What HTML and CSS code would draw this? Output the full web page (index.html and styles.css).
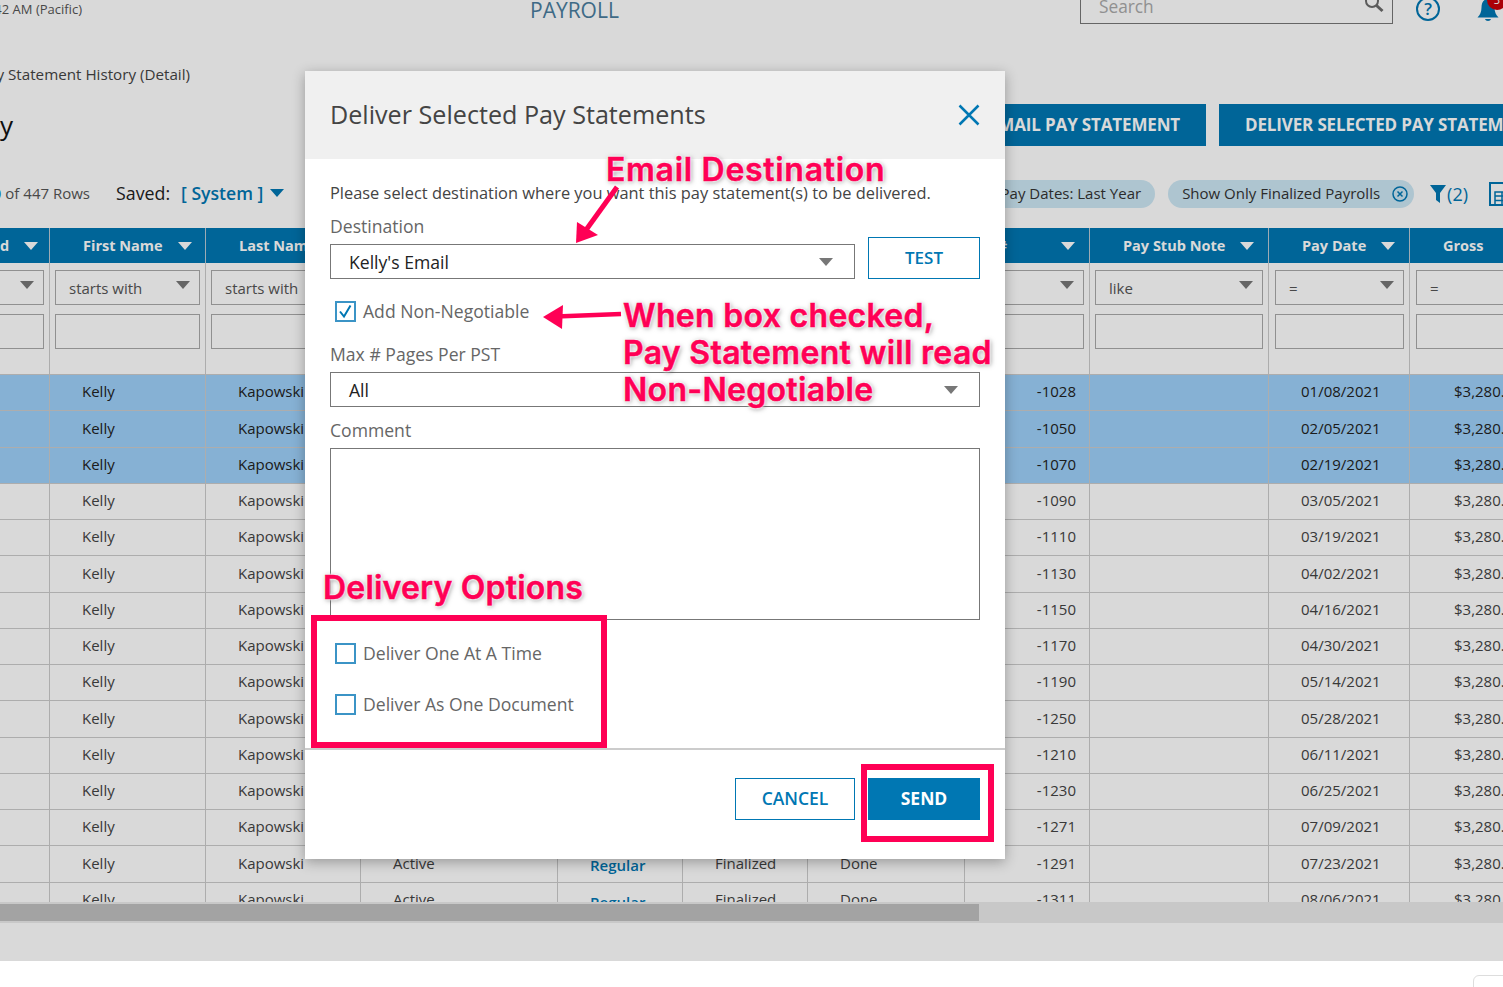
FILE: index.html
```html
<!DOCTYPE html>
<html lang="en">
<head>
<meta charset="utf-8">
<title>Deliver Selected Pay Statements</title>
<link rel="stylesheet" href="styles.css">
</head>
<body>
<div class="page">
  <header class="topbar">
    <div class="time"><span>9:42 AM (Pacific)</span></div>
    <div class="app-name">PAYROLL</div>
    <div class="search">
      <span class="search-text">Search</span>
      <svg class="search-icon" width="20" height="20" viewBox="0 0 20 20"><circle cx="8" cy="6" r="6" fill="none" stroke="#6b6b6b" stroke-width="2"/><path d="M12.5 10.5 18.5 16" stroke="#6b6b6b" stroke-width="3" fill="none"/></svg>
    </div>
    <svg class="help" width="26" height="26" viewBox="0 0 26 26"><circle cx="13" cy="13" r="11" fill="none" stroke="#0077b3" stroke-width="2"/><text x="13" y="19" text-anchor="middle" class="help-q">?</text></svg>
    <div class="bell-wrap">
      <svg width="22" height="26" viewBox="0 0 22 26"><path d="M11 2C6.500 2 4.500 6 4.500 10.500 4.500 15 3 18 .5 20.500H21.500C19 18 17.500 15 17.500 10.500 17.500 6 15.500 2 11 2Z" fill="#0077b3"/><path d="M8 22H14C13.500 24.500 8.500 24.500 8 22Z" fill="#0077b3"/></svg>
      <span class="badge">3</span>
    </div>
  </header>

  <div class="crumb"><span>Pay Statement History (Detail)</span></div>

  <div class="title-row">
    <h1 class="title"><span>Pay Statement History</span></h1>
    <div class="actions">
      <button class="primary email">EMAIL PAY STATEMENT</button>
      <button class="primary">DELIVER SELECTED PAY STATEMENTS</button>
    </div>
  </div>

  <div class="toolbar">
    <div class="rows-count"><span><b class="range">1 - 50</b> of 447 Rows</span></div>
    <div class="saved">Saved:</div>
    <div class="system">[ System ]</div>
    <i class="tri tri-blue"></i>
    <div class="filters">
      <div class="chip">Pay Dates: Last Year</div>
      <div class="chip chip-x">Show Only Finalized Payrolls
        <svg width="16" height="16" viewBox="0 0 16 16"><circle cx="8" cy="8" r="7" fill="none" stroke="#0077b3" stroke-width="1.500"/><path d="M5.500 5.500 10.500 10.500M10.500 5.500 5.500 10.500" stroke="#0077b3" stroke-width="1.500"/></svg>
      </div>
      <svg class="funnel" width="16" height="20" viewBox="0 0 16 20"><path d="M0 1H16L10 9V19L6 16V9Z" fill="#0077b3"/></svg>
      <span class="filter-count">(2)</span>
      <svg class="file" width="22" height="24" viewBox="0 0 22 24"><path d="M1 1H14L21 7V23H1Z" fill="none" stroke="#0077b3" stroke-width="2"/><path d="M6 14H21M6 18.500H21M6 23V10H21M13 10V23" fill="none" stroke="#0077b3" stroke-width="1.500"/></svg>
    </div>
  </div>

  <div class="grid-view">
    <div class="row head">
      <div class="hc hc-first"><span>d</span><i class="tri tri-white"></i></div>
      <div class="hc"><span>First Name</span><i class="tri tri-white"></i></div>
      <div class="hc"><span>Last Name</span><i class="tri tri-white"></i></div>
      <div class="hc"><span>Status</span><i class="tri tri-white"></i></div>
      <div class="hc"><span>Type</span><i class="tri tri-white"></i></div>
      <div class="hc"><span>Payroll</span><i class="tri tri-white"></i></div>
      <div class="hc"><span>Delivery</span><i class="tri tri-white"></i></div>
      <div class="hc hc-num"><span>Check #</span><i class="tri tri-white"></i></div>
      <div class="hc"><span>Pay Stub Note</span><i class="tri tri-white"></i></div>
      <div class="hc"><span>Pay Date</span><i class="tri tri-white"></i></div>
      <div class="hc"><span>Gross</span></div>
    </div>
    <div class="row filter-row">
      <div class="fc fc-first"><div class="fbox fsel"><i class="tri tri-grey"></i></div><div class="fbox"></div></div>
      <div class="fc"><div class="fbox fsel">starts with<i class="tri tri-grey"></i></div><div class="fbox"></div></div>
      <div class="fc"><div class="fbox fsel">starts with<i class="tri tri-grey"></i></div><div class="fbox"></div></div>
      <div class="fc"><div class="fbox fsel">starts with<i class="tri tri-grey"></i></div><div class="fbox"></div></div>
      <div class="fc"><div class="fbox fsel">like<i class="tri tri-grey"></i></div><div class="fbox"></div></div>
      <div class="fc"><div class="fbox fsel">like<i class="tri tri-grey"></i></div><div class="fbox"></div></div>
      <div class="fc"><div class="fbox fsel">like<i class="tri tri-grey"></i></div><div class="fbox"></div></div>
      <div class="fc"><div class="fbox fsel">=<i class="tri tri-grey"></i></div><div class="fbox"></div></div>
      <div class="fc"><div class="fbox fsel">like<i class="tri tri-grey"></i></div><div class="fbox"></div></div>
      <div class="fc fc-wide"><div class="fbox fsel">=<i class="tri tri-grey"></i></div><div class="fbox"></div></div>
      <div class="fc fc-wide"><div class="fbox fsel">=</div><div class="fbox"></div></div>
    </div>
    <div class="row data sel"><div></div><div>Kelly</div><div>Kapowski</div><div>Active</div><div class="link">Regular</div><div>Finalized</div><div>Done</div><div class="num">-1028</div><div></div><div>01/08/2021</div><div class="gross">$3,280.00</div></div>
    <div class="row data sel"><div></div><div>Kelly</div><div>Kapowski</div><div>Active</div><div class="link">Regular</div><div>Finalized</div><div>Done</div><div class="num">-1050</div><div></div><div>02/05/2021</div><div class="gross">$3,280.00</div></div>
    <div class="row data sel"><div></div><div>Kelly</div><div>Kapowski</div><div>Active</div><div class="link">Regular</div><div>Finalized</div><div>Done</div><div class="num">-1070</div><div></div><div>02/19/2021</div><div class="gross">$3,280.00</div></div>
    <div class="row data"><div></div><div>Kelly</div><div>Kapowski</div><div>Active</div><div class="link">Regular</div><div>Finalized</div><div>Done</div><div class="num">-1090</div><div></div><div>03/05/2021</div><div class="gross">$3,280.00</div></div>
    <div class="row data"><div></div><div>Kelly</div><div>Kapowski</div><div>Active</div><div class="link">Regular</div><div>Finalized</div><div>Done</div><div class="num">-1110</div><div></div><div>03/19/2021</div><div class="gross">$3,280.00</div></div>
    <div class="row data"><div></div><div>Kelly</div><div>Kapowski</div><div>Active</div><div class="link">Regular</div><div>Finalized</div><div>Done</div><div class="num">-1130</div><div></div><div>04/02/2021</div><div class="gross">$3,280.00</div></div>
    <div class="row data"><div></div><div>Kelly</div><div>Kapowski</div><div>Active</div><div class="link">Regular</div><div>Finalized</div><div>Done</div><div class="num">-1150</div><div></div><div>04/16/2021</div><div class="gross">$3,280.00</div></div>
    <div class="row data"><div></div><div>Kelly</div><div>Kapowski</div><div>Active</div><div class="link">Regular</div><div>Finalized</div><div>Done</div><div class="num">-1170</div><div></div><div>04/30/2021</div><div class="gross">$3,280.00</div></div>
    <div class="row data"><div></div><div>Kelly</div><div>Kapowski</div><div>Active</div><div class="link">Regular</div><div>Finalized</div><div>Done</div><div class="num">-1190</div><div></div><div>05/14/2021</div><div class="gross">$3,280.00</div></div>
    <div class="row data"><div></div><div>Kelly</div><div>Kapowski</div><div>Active</div><div class="link">Regular</div><div>Finalized</div><div>Done</div><div class="num">-1250</div><div></div><div>05/28/2021</div><div class="gross">$3,280.00</div></div>
    <div class="row data"><div></div><div>Kelly</div><div>Kapowski</div><div>Active</div><div class="link">Regular</div><div>Finalized</div><div>Done</div><div class="num">-1210</div><div></div><div>06/11/2021</div><div class="gross">$3,280.00</div></div>
    <div class="row data"><div></div><div>Kelly</div><div>Kapowski</div><div>Active</div><div class="link">Regular</div><div>Finalized</div><div>Done</div><div class="num">-1230</div><div></div><div>06/25/2021</div><div class="gross">$3,280.00</div></div>
    <div class="row data"><div></div><div>Kelly</div><div>Kapowski</div><div>Active</div><div class="link">Regular</div><div>Finalized</div><div>Done</div><div class="num">-1271</div><div></div><div>07/09/2021</div><div class="gross">$3,280.00</div></div>
    <div class="row data"><div></div><div>Kelly</div><div>Kapowski</div><div>Active</div><div class="link">Regular</div><div>Finalized</div><div>Done</div><div class="num">-1291</div><div></div><div>07/23/2021</div><div class="gross">$3,280.00</div></div>
    <div class="row data"><div></div><div>Kelly</div><div>Kapowski</div><div>Active</div><div class="link">Regular</div><div>Finalized</div><div>Done</div><div class="num">-1311</div><div></div><div>08/06/2021</div><div class="gross">$3,280.00</div></div>
  </div>
  <div class="hscroll"><div class="hthumb"></div></div>
</div>

<div class="corner-widget"></div>
<div class="overlay"></div>

<section class="modal">
  <div class="modal-head">
    <h2>Deliver Selected Pay Statements</h2>
    <svg width="22" height="22" viewBox="0 0 22 22"><path d="M1.500 1.500 20.500 20.500M20.500 1.500 1.500 20.500" stroke="#0077b3" stroke-width="2.500" fill="none"/></svg>
  </div>
  <div class="modal-body">
    <p class="intro">Please select destination where you want this pay statement(s) to be delivered.</p>
    <div class="label lab-dest">Destination</div>
    <div class="dest-row">
      <div class="select dest-select">Kelly's Email<i class="tri tri-grey"></i></div>
      <button class="outline test">TEST</button>
    </div>
    <div class="check check-add">
      <span class="box"><svg width="19" height="19" viewBox="0 0 19 19"><path d="M4 9.500 8 14.500 14.500 3.500" fill="none" stroke="#0077b3" stroke-width="2"/></svg></span>
      Add Non-Negotiable
    </div>
    <div class="label lab-max">Max # Pages Per PST</div>
    <div class="select max-select">All<i class="tri tri-grey"></i></div>
    <div class="label lab-comment">Comment</div>
    <div class="comment"></div>
    <div class="check check-one"><span class="box"></span>Deliver One At A Time</div>
    <div class="check check-doc"><span class="box"></span>Deliver As One Document</div>
  </div>
  <div class="modal-foot">
    <button class="outline cancel">CANCEL</button>
    <button class="send">SEND</button>
  </div>
</section>

<div class="note note-email">Email Destination</div>
<div class="note note-box">When box checked,<br>Pay Statement will read<br>Non-Negotiable</div>
<div class="note note-delivery">Delivery Options</div>
<div class="mark mark-options"></div>
<div class="mark mark-send"></div>
<svg class="arrows" width="1503" height="987" viewBox="0 0 1503 987">
  <path d="M617 187 586 230" stroke="#ff0055" stroke-width="5" fill="none"/>
  <path d="M576 243 577 222 598 235Z" fill="#ff0055"/>
  <path d="M621 314 556 316.500" stroke="#ff0055" stroke-width="4.500" fill="none"/>
  <path d="M543 317 563 305 562 329Z" fill="#ff0055"/>
</svg>
</body>
</html>
```

FILE: styles.css
```css
* { box-sizing: border-box; }
html, body { margin: 0; padding: 0; height: 987px; overflow: hidden; background: #fff; }
body { position: relative; width: 1503px; font-family: "Open Sans", "Noto Sans", sans-serif; color: #333; }
button { font-family: inherit; cursor: pointer; }
i { display: block; }

.page { width: 1503px; height: 961px; overflow: hidden; background: #fff; }

/* triangles */
.tri { width: 0; height: 0; border-left: 7px solid transparent; border-right: 7px solid transparent; border-top: 8px solid #777; flex: none; }
.tri-blue { border-top-color: #0077b3; margin-left: 7px; margin-top: -3px; }
.tri-white { border-top-color: #fff; margin-left: 15px; }

/* top bar */
.topbar { display: flex; align-items: flex-end; height: 40px; margin-top: -16px; }
.time { width: 82px; height: 40px; display: flex; justify-content: flex-end; white-space: nowrap; font-size: 13px; line-height: 18px; padding-top: 16px; color: #555; }
.app-name { margin-left: 448px; width: 90px; height: 40px; padding-top: 12px; font-size: 21px; line-height: 28px; color: #4a7d9e; white-space: nowrap; }
.search { margin-left: 460px; width: 313px; height: 40px; border: 1px solid #777; display: flex; align-items: center; justify-content: space-between; padding: 4px 8px 0 18px; }
.search-text { font-size: 17.300px; color: #aaa; }
.search-icon { margin-top: -2px; }
.help { margin-left: 22px; margin-bottom: 2px; flex: none; align-self: flex-end; }
.help-q { font: 600 17px "Open Sans", sans-serif; fill: #0077b3; }
.bell-wrap { position: relative; margin-left: 36px; width: 22px; height: 26px; margin-bottom: 1px; flex: none; }
.badge { position: absolute; left: 10px; top: -7px; width: 20px; height: 20px; border-radius: 50%; background: #c8000a; color: #fff; font-size: 11px; line-height: 20px; text-align: center; }

.crumb { margin-top: 39px; width: 190px; height: 22px; display: flex; justify-content: flex-end; white-space: nowrap; font-size: 15.200px; line-height: 22px; color: #444; }

.title-row { display: flex; height: 42px; margin-top: 19px; }
.title { width: 13px; display: flex; justify-content: flex-end; white-space: nowrap; margin: 0; font-size: 26px; font-weight: 500; line-height: 42px; color: #111; }
.actions { display: flex; gap: 13px; margin-left: 950px; flex: none; }
.primary { height: 42px; padding: 0 26px 2px; border: 0; background: #0077b3; color: #fff; font-size: 17px; font-weight: 700; letter-spacing: -.15px; white-space: nowrap; flex: none; }

.toolbar { display: flex; align-items: center; height: 28px; margin-top: 34px; }
.rows-count { width: 90px; display: flex; justify-content: flex-end; white-space: nowrap; font-size: 15px; color: #555; margin-top: -2px; }
.range { font-weight: 400; color: #0077b3; }
.saved { margin-left: 26px; font-size: 17.800px; color: #222; margin-top: -2px; }
.system { margin-left: 11px; font-size: 17.600px; font-weight: 600; color: #0077b3; white-space: nowrap; margin-top: -2px; }
.filters { display: flex; align-items: center; margin-left: auto; margin-right: -8px; }
.chip { height: 28px; border-radius: 14px; background: #cde8f5; display: flex; align-items: center; padding: 0 14px 2px; font-size: 15px; color: #333; white-space: nowrap; margin-left: 13px; }
.chip-x { padding: 0 6px 2px 14px; gap: 12px; }
.chip-x svg { margin-top: 2px; }
.funnel { margin-left: 16px; }
.filter-count { margin-left: 1px; font-size: 18px; color: #0077b3; }
.file { margin-left: 21px; }

/* grid */
.grid-view { margin-top: 20px; height: 674px; overflow: hidden; }
.row { display: grid; grid-template-columns: 50px 156px 155px 197px 125px 125px 157px 125px 179px 141px 130px; width: 1540px; }
.head { height: 35px; background: #0077b3; color: #fff; }
.hc { display: flex; align-items: center; padding-left: 33px; font-size: 14.500px; font-weight: 700; border-right: 1px solid #b9c9d4; white-space: nowrap; }
.hc-first { padding-left: 0; }
.hc-num { padding-left: 0; padding-right: 14px; }
.hc-num span { display: flex; width: 42px; justify-content: flex-end; }
.hc-num .tri { margin-left: auto; }
.filter-row { height: 112px; }
.fc { padding: 7px 5px 0; border-right: 1px solid #ccc; border-bottom: 1px solid #ccc; display: flex; flex-direction: column; gap: 9px; }
.fc-first { padding-left: 0; }
.fc-wide { padding-left: 6px; }
.fbox { height: 35px; border: 1px solid #aaa; flex: none; }
.fc-first .fbox { margin-left: -2px; }
.fsel { display: flex; align-items: center; justify-content: space-between; padding: 0 9px 0 13px; font-size: 15px; color: #555; }
.fsel .tri { margin-top: -6px; margin-left: auto; }
.data { height: 36.250px; font-size: 15px; color: #444; }
.data > div { display: flex; align-items: center; padding-left: 32px; padding-bottom: 2.500px; border-right: 1px solid #ccc; border-bottom: 1px solid #ccc; white-space: nowrap; overflow: hidden; }
.data .link { font-weight: 600; color: #0077b3; padding-top: 3px; padding-bottom: 0; }
.data .num { justify-content: flex-end; padding-right: 13px; }
.data .gross { padding-left: 44px; }
.sel { background: #9ed1f9; color: #222; }

.hscroll { height: 21px; padding: 2px 0; background: #ececec; }
.hthumb { width: 979px; height: 17px; background: #c0c0c0; }

.corner-widget { position: absolute; left: 1473px; top: 975px; width: 60px; height: 40px; border: 1px solid #ddd; border-radius: 6px; background: #fff; }
.overlay { position: absolute; left: 0; top: 0; width: 1503px; height: 961px; background: rgba(0,0,0,.15); }

/* modal */
.modal { position: absolute; left: 305px; top: 71px; width: 700px; height: 788px; background: #fff; box-shadow: 0 3px 12px rgba(0,0,0,.3); display: flex; flex-direction: column; color: #555; }
.modal-head { height: 88px; background: #f0f0f0; display: flex; align-items: center; justify-content: space-between; padding: 0 25px 2px 25px; flex: none; }
.modal-head h2 { margin: 0; font-size: 25.150px; font-weight: 400; color: #444; }
.modal-head svg { margin-top: 2px; }
.modal-body { padding: 0 25px; display: flex; flex-direction: column; flex: none; }
.intro { margin: 23px 0 0; font-size: 16.400px; line-height: 22px; height: 23px; color: #444; white-space: nowrap; }
.label { font-size: 17.600px; line-height: 22px; color: #666; height: 24px; }
.lab-dest { margin-top: 10px; }
.dest-row { display: flex; align-items: flex-end; gap: 13px; margin-top: -2px; }
.select { height: 35px; border: 1px solid #777; display: flex; align-items: center; justify-content: space-between; padding: 1px 21px 0 18px; font-size: 17.600px; color: #222; }
.dest-select { width: 525px; }
.outline { border: 1px solid #0077b3; background: #fff; color: #0077b3; font-size: 17.500px; font-weight: 600; height: 42px; padding: 0 0 2px; }
.test { width: 112px; font-size: 17px; padding-bottom: 2px; }
.check { display: flex; align-items: center; gap: 7px; padding-left: 5px; height: 22px; font-size: 17.600px; color: #666; white-space: nowrap; }
.box { width: 21px; height: 21px; border: 2px solid #3b94c6; display: block; flex: none; }
.box svg { display: block; margin: -1px 0 0 -1px; }
.check-add { margin-top: 21px; }
.lab-max { margin-top: 21px; }
.max-select { margin-top: 5px; }
.lab-comment { margin-top: 12px; }
.comment { margin-top: 5px; height: 172px; border: 1px solid #777; }
.check-one { margin-top: 22px; }
.check-doc { margin-top: 29px; }
.modal-foot { margin-top: 33px; border-top: 2px solid #ccc; padding: 28px 25px 0; display: flex; justify-content: flex-end; gap: 13px; }
.cancel { width: 120px; }
.send { width: 112px; height: 42px; border: 0; background: #0077b3; color: #fff; font-size: 17.500px; font-weight: 700; padding: 0 0 2px; }

/* annotations */
.note { position: absolute; font-family: Inter, "Open Sans", sans-serif; font-weight: 600; font-size: 32px; line-height: 37px; letter-spacing: .3px; color: #ff0055; white-space: nowrap; -webkit-text-stroke: .5px #ff0055; text-shadow: 0 0 2px #fff, 0 0 3px #fff, 0 0 3px #fff, 1px 1px 5px rgba(0,0,0,.5); }
.note-email { left: 606px; top: 151px; letter-spacing: .7px; }
.note-box { left: 623px; top: 297px; }
.note-delivery { left: 323px; top: 569px; letter-spacing: .2px; }
.mark { position: absolute; border: 6px solid #ff0055; }
.mark-options { left: 311px; top: 615px; width: 296px; height: 133px; }
.mark-send { left: 861px; top: 764px; width: 133px; height: 78px; }
.arrows { position: absolute; left: 0; top: 0; pointer-events: none; }
```
